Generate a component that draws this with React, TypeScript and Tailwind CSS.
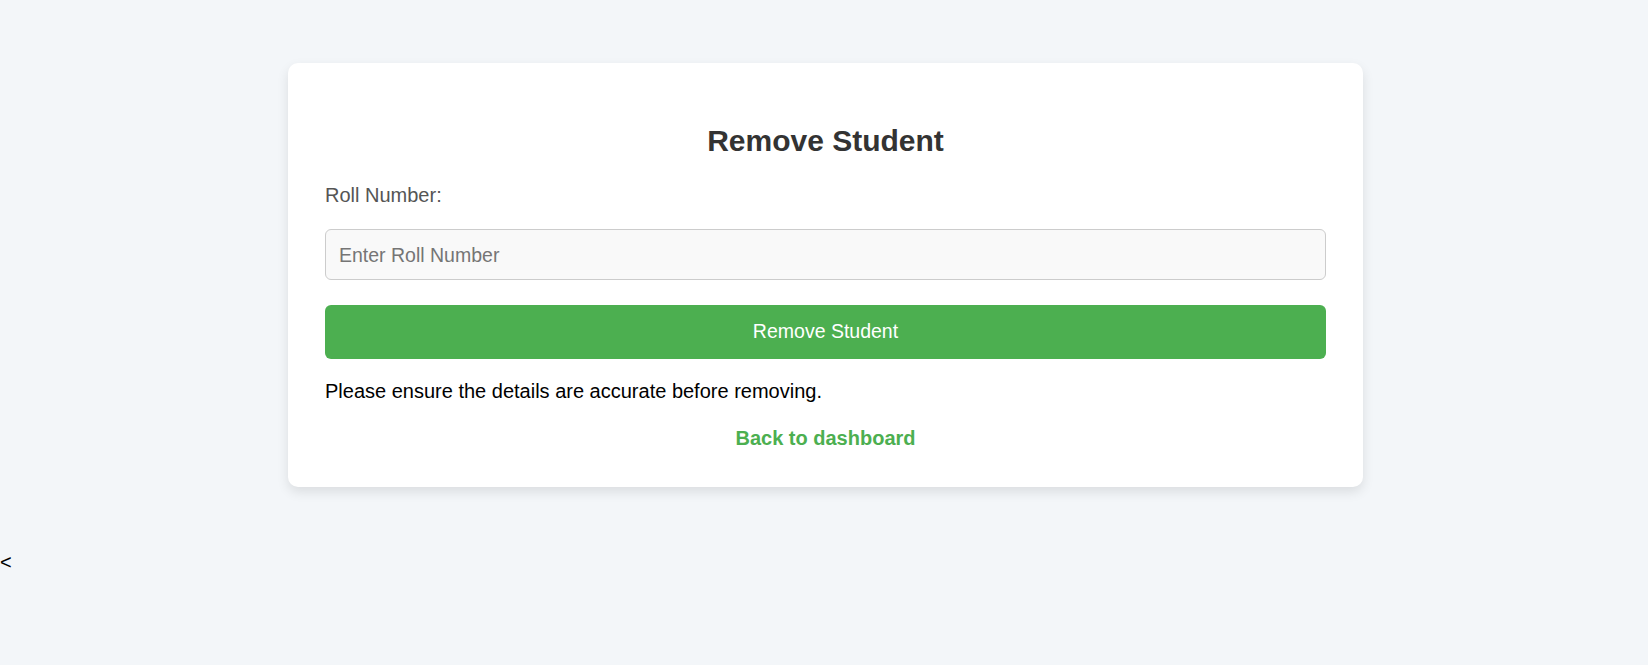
import React, { useState } from 'react';

export default function App() {
  const [roll, setRoll] = useState('');

  return (
    <div className="min-h-screen bg-[#f3f6f9] pt-[63px] pl-[3px] font-['Liberation_Sans',Arial,sans-serif] text-[20px] text-black">
      {/* Card */}
      <div className="mx-auto w-[1075px] rounded-[10px] bg-white px-[37px] pt-[37px] pb-[37px] shadow-[0_5px_12px_rgba(0,0,0,0.1)]">
        <h2 className="mt-[24px] mb-[26px] text-center text-[30px] font-bold leading-[34px] text-[#333]">
          Remove Student
        </h2>

        <label htmlFor="roll" className="block leading-[23px] text-[#555]">
          Roll Number:
        </label>
        <input
          id="roll"
          type="text"
          value={roll}
          onChange={(e) => setRoll(e.target.value)}
          placeholder="Enter Roll Number"
          className="mt-[22px] block h-[51px] w-full rounded-[6px] border border-[#ccc] bg-[#f9f9f9] px-[13px] pt-[2px] text-[19.5px] text-[#333] placeholder:text-[#757575] outline-none"
        />

        <button
          type="button"
          className="mt-[25px] block h-[54px] w-full rounded-[6px] bg-[#4caf50] text-center text-[19.5px] text-white"
        >
          Remove Student
        </button>

        <p className="mt-[21px] leading-[23px]">
          Please ensure the details are accurate before removing.
        </p>

        <a
          href="#"
          className="mt-[24px] block text-center font-bold leading-[23px] text-[#4caf50]"
        >
          Back to dashboard
        </a>
      </div>

      <div className="mt-[64px] -ml-[3px] leading-[23px]">&lt;</div>
    </div>
  );
}
